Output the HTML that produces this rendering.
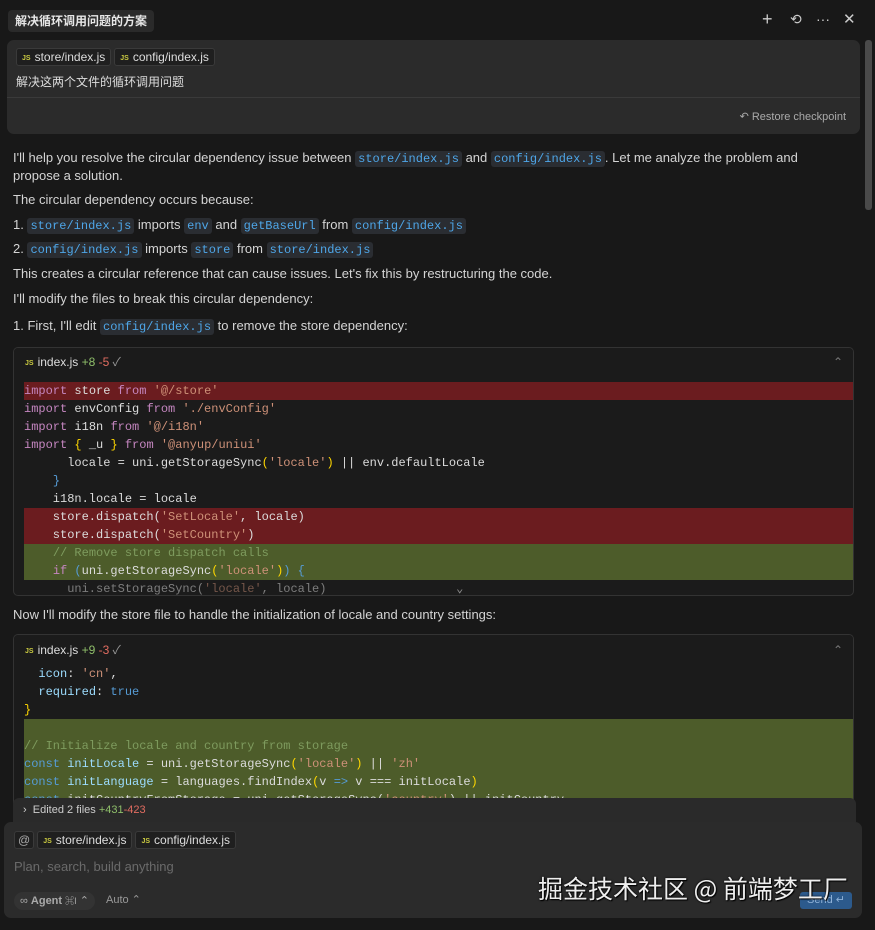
<!DOCTYPE html>
<html><head><meta charset="utf-8"><style>
*{margin:0;padding:0;box-sizing:border-box}
body{width:875px;height:930px;background:#181818;color:#d4d4d4;font-family:"Liberation Sans","Noto Sans CJK SC",sans-serif;font-size:13px;position:relative;overflow:hidden}
.abs{position:absolute}
.chip{display:inline-block;background:#1f1f1f;border:1px solid #3a3a3a;border-radius:3px;padding:0 5px;height:18px;line-height:16px;font-size:12px;color:#ddd;margin-right:3px}
.js{color:#cbcb41;font-size:7px;font-weight:bold;margin-right:4px;vertical-align:1px}
.c{font-family:"Liberation Mono",monospace;font-size:12px;background:#2a2d32;color:#4ea6e8;padding:1px 3px;border-radius:3px}
.t{position:absolute;left:13px;line-height:18px}
.code{position:absolute;left:13px;width:841px;border:1px solid #333;border-radius:5px;background:#1b1b1b;overflow:hidden}
.hdr{height:28px;line-height:28px;padding-left:11px;font-size:12px;color:#ddd;background:#1b1b1b}
.ln{height:18px;line-height:18px;font-family:"Liberation Mono",monospace;font-size:12px;color:#dcdcdc;margin-left:10px;white-space:pre}
.r{background:#6b1c1f}.g{background:#4d5c2a}
.k{color:#c586c0}.s{color:#ce9178}.b{color:#569cd6}.y{color:#ffd700}.cm{color:#7e9b5e}.v{color:#9cdcfe}
</style></head><body>
<div class="abs" style="left:8px;top:10px;background:#2a2a2a;border-radius:4px;padding:0 7px;height:22px;line-height:22px;font-size:12px;font-weight:bold;color:#e6e6e6">解决循环调用问题的方案</div>
<div class="abs" style="left:762px;top:9px;font-size:18px;color:#ccc">+</div>
<div class="abs" style="left:790px;top:11px;font-size:14px;color:#ccc">⟲</div>
<div class="abs" style="left:816px;top:11px;font-size:14px;color:#ccc">···</div>
<div class="abs" style="left:843px;top:10px;font-size:15px;color:#ccc">✕</div>
<div class="abs" style="left:865px;top:40px;width:7px;height:170px;background:#4a4a4a;border-radius:3px"></div>

<div class="abs" style="left:7px;top:40px;width:853px;height:94px;background:#2b2b2b;border-radius:7px">
 <div style="position:absolute;left:9px;top:8px"><span class="chip"><span class="js">JS</span>store/index.js</span><span class="chip"><span class="js">JS</span>config/index.js</span></div>
 <div style="position:absolute;left:9px;top:33px;font-size:12px;color:#ddd">解决这两个文件的循环调用问题</div>
 <div style="position:absolute;left:0;right:0;top:57px;border-top:1px solid #3a3a3a"></div>
 <div style="position:absolute;right:14px;top:70px;font-size:11px;color:#aaa">↶ Restore checkpoint</div>
</div>

<div class="t" style="top:149px">I'll help you resolve the circular dependency issue between <span class="c">store/index.js</span> and <span class="c">config/index.js</span>. Let me analyze the problem and</div>
<div class="t" style="top:167px">propose a solution.</div>
<div class="t" style="top:191px">The circular dependency occurs because:</div>
<div class="t" style="top:216px">1. <span class="c">store/index.js</span> imports <span class="c">env</span> and <span class="c">getBaseUrl</span> from <span class="c">config/index.js</span></div>
<div class="t" style="top:240px">2. <span class="c">config/index.js</span> imports <span class="c">store</span> from <span class="c">store/index.js</span></div>
<div class="t" style="top:265px">This creates a circular reference that can cause issues. Let's fix this by restructuring the code.</div>
<div class="t" style="top:290px">I'll modify the files to break this circular dependency:</div>
<div class="t" style="top:317px">1. First, I'll edit <span class="c">config/index.js</span> to remove the store dependency:</div>

<div class="code" style="top:347px;height:249px">
 <div class="hdr"><span class="js">JS</span>index.js <span style="color:#8fbf6a">+8</span> <span style="color:#e06c60">-5</span> <span style="color:#999">✓</span><span style="float:right;margin-right:10px;color:#777">⌃</span></div>
 <div style="height:6px"></div>
 <div class="ln r"><span class="k">import</span> store <span class="k">from</span> <span class="s">'@/store'</span></div>
 <div class="ln"><span class="k">import</span> envConfig <span class="k">from</span> <span class="s">'./envConfig'</span></div>
 <div class="ln"><span class="k">import</span> i18n <span class="k">from</span> <span class="s">'@/i18n'</span></div>
 <div class="ln"><span class="k">import</span> <span class="y">{</span> _u <span class="y">}</span> <span class="k">from</span> <span class="s">'@anyup/uniui'</span></div>
 <div class="ln">      locale = uni.getStorageSync<span class="y">(</span><span class="s">'locale'</span><span class="y">)</span> || env.defaultLocale</div>
 <div class="ln">    <span class="b">}</span></div>
 <div class="ln">    i18n.locale = locale</div>
 <div class="ln r">    store.dispatch(<span class="s">'SetLocale'</span>, locale)</div>
 <div class="ln r">    store.dispatch(<span class="s">'SetCountry'</span>)</div>
 <div class="ln g">    <span class="cm">// Remove store dispatch calls</span></div>
 <div class="ln g">    <span class="k">if</span> <span class="b">(</span>uni.getStorageSync<span class="y">(</span><span class="s">'locale'</span><span class="y">)</span><span class="b">)</span> <span class="b">{</span></div>
 <div class="ln" style="opacity:.5">      uni.setStorageSync(<span class="s">'locale'</span>, locale)                  <span style="color:#fff">⌄</span></div>
</div>

<div class="t" style="top:606px">Now I'll modify the store file to handle the initialization of locale and country settings:</div>

<div class="code" style="top:634px;height:180px">
 <div class="hdr" style="height:30px;line-height:30px"><span class="js">JS</span>index.js <span style="color:#8fbf6a">+9</span> <span style="color:#e06c60">-3</span> <span style="color:#999">✓</span><span style="float:right;margin-right:10px;color:#777">⌃</span></div>
 <div class="ln">  <span class="v">icon</span>: <span class="s">'cn'</span>,</div>
 <div class="ln">  <span class="v">required</span>: <span class="b">true</span></div>
 <div class="ln"><span class="y">}</span></div>
 <div class="ln g"> </div>
 <div class="ln g"><span class="cm">// Initialize locale and country from storage</span></div>
 <div class="ln g"><span class="b">const</span> <span class="v">initLocale</span> = uni.getStorageSync<span class="y">(</span><span class="s">'locale'</span><span class="y">)</span> || <span class="s">'zh'</span></div>
 <div class="ln g"><span class="b">const</span> <span class="v">initLanguage</span> = languages.findIndex<span class="y">(</span>v <span class="b">=&gt;</span> v === initLocale<span class="y">)</span></div>
 <div class="ln g"><span class="b">const</span> initCountryFromStorage = uni.getStorageSync(<span class="s">'country'</span>) || initCountry</div>
</div>

<div class="abs" style="left:13px;top:798px;width:843px;height:28px;background:#2a2a2a;border-radius:6px 6px 0 0;padding:6px 0 0 10px;font-size:11px;color:#ccc">›&nbsp; Edited 2 files <span style="color:#8fbf6a">+431</span><span style="color:#e06c60">-423</span></div>

<div class="abs" style="left:4px;top:822px;width:858px;height:96px;background:#2b2b2b;border-radius:7px">
 <div style="position:absolute;left:10px;top:9px"><span class="chip" style="padding:0 3px;color:#aaa">@</span><span class="chip"><span class="js">JS</span>store/index.js</span><span class="chip"><span class="js">JS</span>config/index.js</span></div>
 <div style="position:absolute;left:10px;top:37px;font-size:13px;color:#6a6a6a">Plan, search, build anything</div>
 <div style="position:absolute;left:10px;top:70px;height:18px;line-height:18px;background:#333;border-radius:9px;padding:0 6px;font-size:11px;color:#aaa">∞ <b>Agent</b> <span style="font-size:9px">⌘I</span> ⌃</div>
 <div style="position:absolute;left:102px;top:71px;font-size:11px;color:#999">Auto ⌃</div>
 <div style="position:absolute;left:796px;top:70px;width:52px;height:17px;background:#2c5a8c;border-radius:3px;font-size:11px;color:#8fb2d8;text-align:center;line-height:17px">Send ↵</div>
</div>
<div class="abs" style="left:538px;top:872px;font-size:25px;color:#eee;font-family:'Noto Sans CJK SC',sans-serif;text-shadow:0 0 2px #000,1px 1px 1px #000;line-height:32px;white-space:nowrap">掘金技术社区 @ 前端梦工厂</div>
</body></html>
